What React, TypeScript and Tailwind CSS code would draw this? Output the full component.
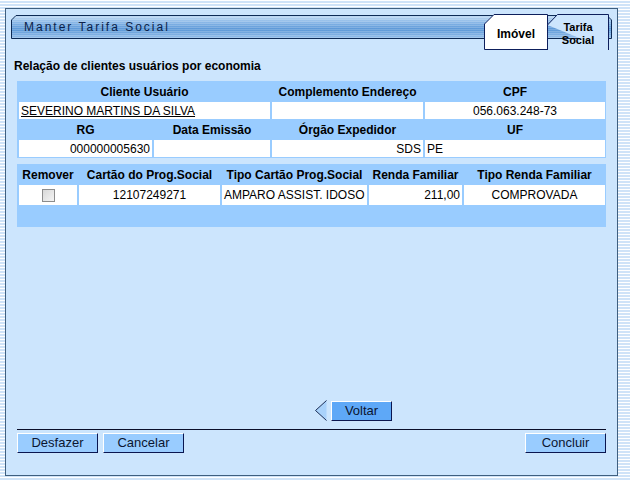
// Manter Tarifa Social — relação de clientes usuários por economia

const font = "font-['Liberation_Sans',Arial,sans-serif]";

function HeaderBar() {
  return (
    <div className="relative h-[24px] w-[601px]">
      <svg className="absolute inset-0" width="601" height="24" aria-hidden="true">
        <defs>
          <linearGradient id="hdr" x1="0" y1="0" x2="0" y2="1">
            <stop offset="0" stopColor="#c2dcf5" />
            <stop offset="0.35" stopColor="#80b1e4" />
            <stop offset="0.6" stopColor="#5a97d7" />
            <stop offset="1" stopColor="#98c1eb" />
          </linearGradient>
          <pattern id="lines" width="4" height="2" patternUnits="userSpaceOnUse">
            <rect width="4" height="1" fill="#ffffff" opacity="0.18" />
          </pattern>
        </defs>
        <path d="M0.5 5 L5 0.5 L596 0.5 L600.5 5 L600.5 23.5 L0.5 23.5 Z" fill="url(#hdr)" stroke="#0d2a55" />
        <path d="M1 5 L5 1 L596 1 L600 5 L600 23 L1 23 Z" fill="url(#lines)" />
      </svg>
      <span className="absolute left-[13px] top-[5px] text-[12px] leading-[14px] tracking-[2px] text-[#0b1f4a]">
        Manter Tarifa Social
      </span>

      {/* Tabs */}
      <div className="absolute left-[473px] top-[-1px] flex">
        <div className="relative h-[36px] w-[64px]">
          <svg className="absolute inset-0" width="64" height="36" aria-hidden="true">
            <path d="M0.5 10 L10 0.5 L63.5 0.5 L63.5 35.5 L0.5 35.5 Z" fill="#ffffff" stroke="#0d1f5c" />
          </svg>
          <span className="relative flex h-full items-center justify-center pt-[3px] text-[12px] font-bold text-black">
            Imóvel
          </span>
        </div>
        <div className="relative ml-[-1px] h-[36px] w-[62px]">
          <svg className="absolute inset-0" width="62" height="36" aria-hidden="true">
            <path d="M0.5 11 L10.5 0.5 L61.5 0.5 L61.5 36" fill="#cce5fd" stroke="#0d1f5c" />
            <path d="M0.5 11 L0.5 36" stroke="#0d1f5c" />
          </svg>
          <span className="relative flex h-full flex-col items-center justify-center pt-[3px] text-[11px] font-bold leading-[13px] text-black">
            <span>Tarifa</span>
            <span>Social</span>
          </span>
        </div>
      </div>
    </div>
  );
}

function Head({ children, className = '' }: { children: React.ReactNode; className?: string }) {
  return (
    <div className={`flex items-center justify-center text-[12px] font-bold text-black ${className}`}>
      {children}
    </div>
  );
}

function Cell({ children, className = '' }: { children?: React.ReactNode; className?: string }) {
  return <div className={`flex items-center bg-white px-[2px] text-[12px] text-black ${className}`}>{children}</div>;
}

function ClienteTable() {
  return (
    <div className="grid grid-cols-[133px_116px_151px_180px] auto-rows-[17px] gap-[2px] bg-[#99ccff] px-[2px] pb-[1px] pt-[2px]">
      <Head className="col-span-2">Cliente Usuário</Head>
      <Head>Complemento Endereço</Head>
      <Head>CPF</Head>

      <Cell className="col-span-2">
        <span className="underline">SEVERINO MARTINS DA SILVA</span>
      </Cell>
      <Cell />
      <Cell className="justify-center">056.063.248-73</Cell>

      <Head>RG</Head>
      <Head>Data Emissão</Head>
      <Head>Órgão Expedidor</Head>
      <Head>UF</Head>

      <Cell className="justify-end">000000005630</Cell>
      <Cell />
      <Cell className="justify-end">SDS</Cell>
      <Cell>PE</Cell>
    </div>
  );
}

function ProgramaTable() {
  return (
    <div className="flex h-[63px] flex-col bg-[#99ccff] px-[2px] pt-[2px]">
      <div className="grid grid-cols-[58px_141px_145px_93px_141px] grid-rows-[17px_20px] gap-[2px]">
        <Head>Remover</Head>
        <Head>Cartão do Prog.Social</Head>
        <Head>Tipo Cartão Prog.Social</Head>
        <Head>Renda Familiar</Head>
        <Head>Tipo Renda Familiar</Head>

        <Cell className="justify-center">
          <span className="block h-[13px] w-[13px] border border-[#8c8c8c] bg-[linear-gradient(135deg,#d8d8d8,#f4f4f4)]" />
        </Cell>
        <Cell className="justify-center">12107249271</Cell>
        <Cell>AMPARO ASSIST. IDOSO</Cell>
        <Cell className="justify-end">211,00</Cell>
        <Cell className="justify-center">COMPROVADA</Cell>
      </div>
    </div>
  );
}

function Button({ label, className = '', bright = false }: { label: string; className?: string; bright?: boolean }) {
  return (
    <button
      type="button"
      className={`h-[20px] border border-t-white border-l-white border-r-[#0a1650] border-b-[#0a1650] text-[13px] leading-[18px] text-[#0b1530] ${
        bright ? 'bg-[#5ea8f7]' : 'bg-[#99ccff]'
      } ${className}`}
    >
      {label}
    </button>
  );
}

export default function App() {
  return (
    <div
      className={`${font} h-[481px] w-[630px] overflow-hidden bg-[repeating-linear-gradient(180deg,#ffffff_0px,#ffffff_1px,#cfe3f8_1px,#cfe3f8_3px)] pl-[5px] pt-[8px]`}
    >
      <div className="flex h-[468px] w-[613px] flex-col border border-[#3f5f7f] bg-[#cce5fd] px-[5px] pt-[6px]">
        <HeaderBar />

        <h1 className="mt-[20px] pl-[3px] text-[12px] font-bold leading-[14px] text-black">
          Relação de clientes usuários por economia
        </h1>

        <div className="mx-[6px] mt-[8px] flex flex-col">
          <ClienteTable />
          <div className="mt-[6px]">
            <ProgramaTable />
          </div>

          {/* Voltar */}
          <div className="mt-[173px] flex h-[21px] items-center pl-[298px]">
            <svg width="12" height="21" viewBox="0 0 12 21" aria-hidden="true">
              <path d="M11.5 0.5 L0.5 10.5 L11.5 20.5 Z" fill="#a9d2fb" />
              <path d="M11.5 0.5 L0.5 10.5 L11.5 20.5" fill="none" stroke="#1b2d55" />
            </svg>
            <Button label="Voltar" className="ml-[4px] w-[61px]" bright />
          </div>

          <div className="mt-[8px] h-px bg-[#0a0f2a]" />

          <div className="mt-[3px] flex items-start">
            <Button label="Desfazer" className="w-[81px]" />
            <Button label="Cancelar" className="ml-[5px] w-[81px]" />
            <Button label="Concluir" className="ml-auto w-[81px]" />
          </div>
        </div>
      </div>
    </div>
  );
}
